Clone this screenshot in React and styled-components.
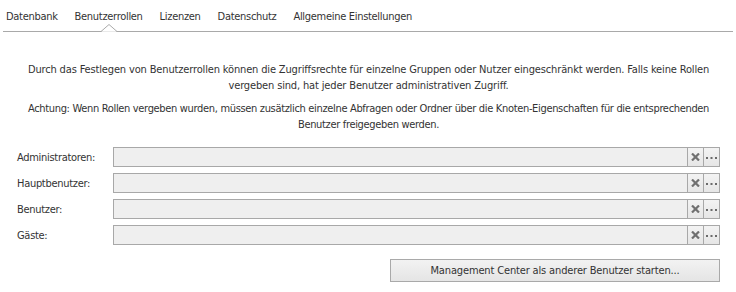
import React from "react"
import styled, { createGlobalStyle } from "styled-components"

const GlobalStyle = createGlobalStyle`
  html, body {
    margin: 0;
    padding: 0;
    background: #ffffff;
  }
  body {
    font-family: "DejaVu Sans Condensed", "Liberation Sans", sans-serif;
    font-size: 11px;
    letter-spacing: -0.3px;
    color: #333333;
  }
`

const Page = styled.div`
  width: 736px;
  height: 292px;
  display: flex;
  flex-direction: column;
  overflow: hidden;
`

const TabBar = styled.div`
  display: flex;
  gap: 17px;
  height: 32px;
  margin: 0 3px;
  padding-left: 3px;
  border-bottom: 1px solid #a9a9a9;
  box-sizing: border-box;
`

const Tab = styled.div`
  position: relative;
  line-height: 33px;
  height: 31px;
  white-space: nowrap;
  color: #333;
`

// small notch that marks the active tab
const Notch = styled.svg`
  position: absolute;
  left: 50%;
  bottom: -1px;
  transform: translateX(-50%);
  display: block;
`

const Content = styled.div`
  padding: 30px 16px 0 17px;
  display: flex;
  flex-direction: column;
`

const Info = styled.p`
  margin: 0 -8px ${(p) => p.gap || 0}px;
  text-align: center;
  line-height: 15.5px;
  letter-spacing: ${(p) => (p.tight ? "-0.33px" : "-0.15px")};
`

const Form = styled.div`
  margin-top: 15px;
  display: grid;
  grid-template-columns: 96px 1fr;
  row-gap: 6px;
  align-items: center;
`

const Label = styled.div`
  white-space: nowrap;
`

const Field = styled.div`
  display: flex;
  height: 20px;
`

const Input = styled.div`
  flex: 1;
  border: 1px solid #a8a8a8;
  background: #efefef;
`

const IconButton = styled.div`
  width: 15px;
  border: 1px solid #a8a8a8;
  border-left: none;
  background: linear-gradient(#f3f3f3, #e6e6e6);
  display: flex;
  align-items: center;
  justify-content: center;
`

const Footer = styled.div`
  display: flex;
  justify-content: flex-end;
  margin-top: 14px;
`

const Button = styled.div`
  width: 330px;
  height: 23px;
  box-sizing: border-box;
  border: 1px solid #a9a9a9;
  background: linear-gradient(#f2f2f2, #e5e5e5);
  display: flex;
  align-items: center;
  justify-content: center;
  letter-spacing: -0.15px;
  color: #333;
`

const tabs = [
  "Datenbank",
  "Benutzerrollen",
  "Lizenzen",
  "Datenschutz",
  "Allgemeine Einstellungen",
]

const roles = ["Administratoren:", "Hauptbenutzer:", "Benutzer:", "Gäste:"]

function ClearIcon() {
  return (
    <svg width="9" height="8" viewBox="0 0 9 8">
      <path d="M1 0.5 L8 7.5 M8 0.5 L1 7.5" stroke="#707070" strokeWidth="2.2" />
    </svg>
  )
}

function DotsIcon() {
  return (
    <svg width="11" height="3" viewBox="0 0 11 3">
      <rect x="0" y="1" width="2" height="2" fill="#6a6a6a" />
      <rect x="4.5" y="1" width="2" height="2" fill="#6a6a6a" />
      <rect x="9" y="1" width="2" height="2" fill="#6a6a6a" />
    </svg>
  )
}

export default function App() {
  return (
    <Page>
      <GlobalStyle />
      <TabBar>
        {tabs.map((t) => (
          <Tab key={t}>
            {t}
            {t === "Benutzerrollen" && (
              <Notch width="16" height="8" viewBox="0 0 16 8">
                <path d="M0 7.5 L8 0.5 L16 7.5" fill="#fff" stroke="#a9a9a9" strokeWidth="1" />
                <rect x="1" y="7.5" width="14" height="1" fill="#fff" />
              </Notch>
            )}
          </Tab>
        ))}
      </TabBar>
      <Content>
        <Info gap={8}>
          Durch das Festlegen von Benutzerrollen können die Zugriffsrechte für einzelne Gruppen oder Nutzer
          eingeschränkt werden. Falls keine Rollen vergeben sind, hat jeder Benutzer administrativen Zugriff.
        </Info>
        <Info tight>
          Achtung: Wenn Rollen vergeben wurden, müssen zusätzlich einzelne Abfragen oder Ordner über die
          Knoten-Eigenschaften für die entsprechenden Benutzer freigegeben werden.
        </Info>
        <Form>
          {roles.map((r) => (
            <React.Fragment key={r}>
              <Label>{r}</Label>
              <Field>
                <Input />
                <IconButton>
                  <ClearIcon />
                </IconButton>
                <IconButton>
                  <DotsIcon />
                </IconButton>
              </Field>
            </React.Fragment>
          ))}
        </Form>
        <Footer>
          <Button>Management Center als anderer Benutzer starten...</Button>
        </Footer>
      </Content>
    </Page>
  )
}
